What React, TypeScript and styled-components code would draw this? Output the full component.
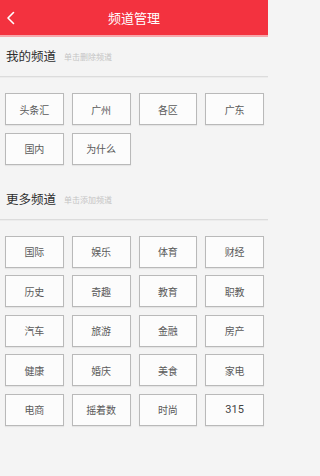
import React from "react";
import styled, { createGlobalStyle } from "styled-components";

const Global = createGlobalStyle`
  html, body { margin: 0; padding: 0; background: #f4f4f4; }
  body { font-family: "Noto Sans CJK SC", "Noto Sans", sans-serif; }
  * { box-sizing: border-box; }
`;

const Page = styled.div`
  width: 268px;
  min-height: 476px;
  background: #f4f4f4;
  display: flex;
  flex-direction: column;
`;

const Header = styled.header`
  height: 37px;
  background: #f3323f;
  border-bottom: 2px solid #f7a6ab;
  display: flex;
  align-items: center;
  justify-content: center;
  position: relative;
`;

const Back = styled.button`
  position: absolute;
  left: 3px;
  top: 9px;
  width: 14px;
  height: 18px;
  padding: 0;
  border: none;
  background: transparent;
  display: flex;
  align-items: center;
  justify-content: center;
`;

const Title = styled.h1`
  margin: 0;
  font-size: 13px;
  font-weight: 400;
  color: #fff;
  letter-spacing: 0;
  line-height: 1;
  margin-top: 0px;
`;

const SectionHead = styled.div<{ $top: number }>`
  height: 40px;
  margin-top: ${(p) => p.$top}px;
  display: flex;
  align-items: center;
  padding-left: 6px;
  border-bottom: 1px solid #dcdcdc;
  box-shadow: 0 1px 0 #ececec;
`;

const SectionTitle = styled.span`
  font-size: 12.5px;
  color: #2e2e2e;
  line-height: 1;
`;

const Hint = styled.span`
  font-size: 8px;
  color: #c4c4c4;
  margin-left: 8px;
  line-height: 1;
  margin-top: 1px;
`;

const Grid = styled.div`
  display: grid;
  grid-template-columns: repeat(4, 1fr);
  column-gap: 8px;
  row-gap: 7.5px;
  padding: 16px 4px 0 5px;
`;

const Tile = styled.div`
  height: 32px;
  background: #fcfcfc;
  border: 1px solid #b9b9b9;
  box-shadow: 0 1px 1px rgba(0, 0, 0, 0.06);
  display: flex;
  align-items: center;
  justify-content: center;
  font-size: 10px;
  color: #5a5a5a;
  font-family: "Noto Sans CJK SC", "Roboto", sans-serif;
`;

const Num = styled.span`
  font-family: "Roboto", "Noto Sans", sans-serif;
  font-size: 11px;
  color: #444;
`;

const mine = ["头条汇", "广州", "各区", "广东", "国内", "为什么"];
const more = [
  "国际", "娱乐", "体育", "财经",
  "历史", "奇趣", "教育", "职教",
  "汽车", "旅游", "金融", "房产",
  "健康", "婚庆", "美食", "家电",
  "电商", "摇着数", "时尚", "315",
];

export default function App() {
  return (
    <>
      <Global />
      <Page>
        <Header>
          <Back aria-label="返回">
            <svg width="9" height="14" viewBox="0 0 9 14">
              <path d="M7.5 1.5 L2 7 L7.5 12.5" fill="none" stroke="#fff" strokeWidth="1.6" strokeLinecap="round" strokeLinejoin="round" />
            </svg>
          </Back>
          <Title>频道管理</Title>
        </Header>
        <SectionHead $top={0}>
          <SectionTitle>我的频道</SectionTitle>
          <Hint>单击删除频道</Hint>
        </SectionHead>
        <Grid>
          {mine.map((c) => (
            <Tile key={c}>{c}</Tile>
          ))}
        </Grid>
        <SectionHead $top={15}>
          <SectionTitle>更多频道</SectionTitle>
          <Hint>单击添加频道</Hint>
        </SectionHead>
        <Grid>
          {more.map((c) => (
            <Tile key={c}>{/^\d+$/.test(c) ? <Num>{c}</Num> : c}</Tile>
          ))}
        </Grid>
      </Page>
    </>
  );
}
